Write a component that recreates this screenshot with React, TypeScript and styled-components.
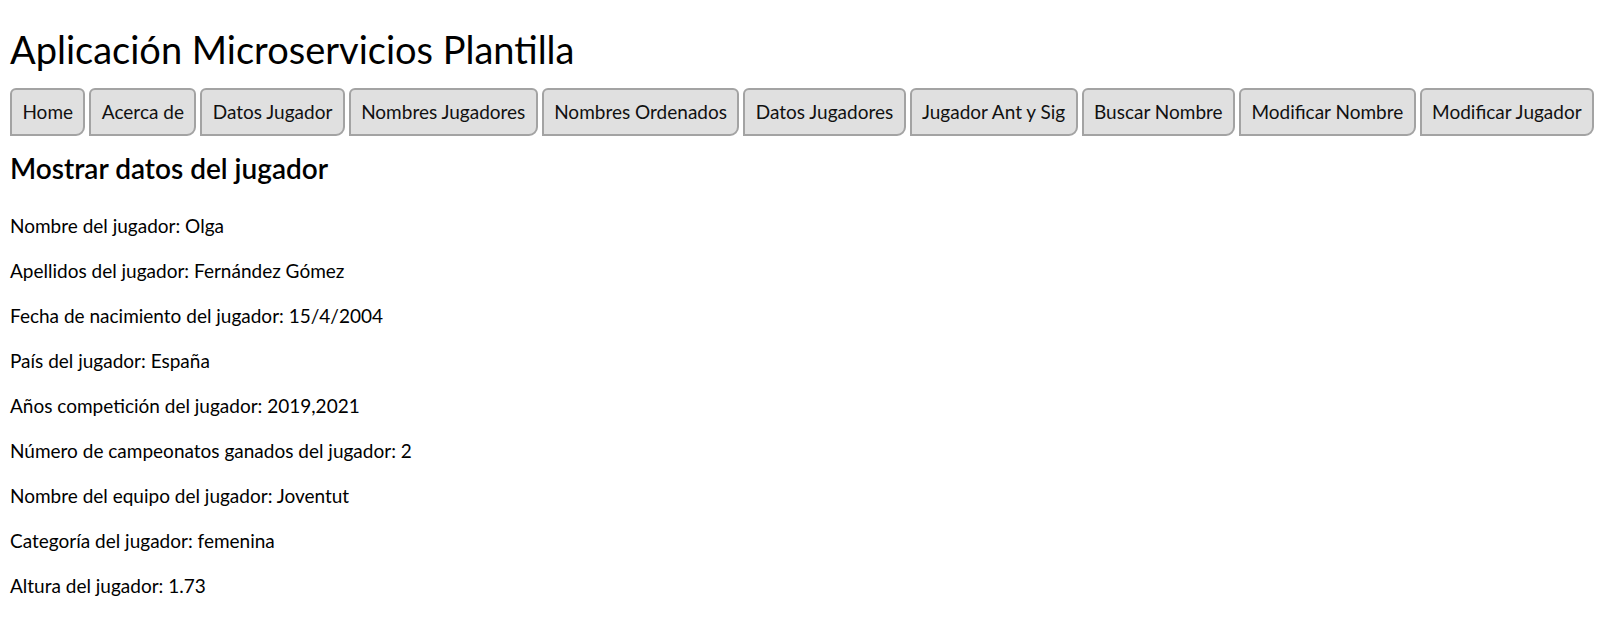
import React from "react";
import styled, { createGlobalStyle } from "styled-components";

const GlobalStyle = createGlobalStyle`
  html, body {
    margin: 0;
    padding: 0;
    background: #ffffff;
  }
  body {
    font-family: Lato, "Noto Sans", "Liberation Sans", sans-serif;
    color: #000000;
  }
`;

const Page = styled.div`
  padding: 8px 10px;
  display: flex;
  flex-direction: column;
  align-items: flex-start;
`;

const Title = styled.h1`
  margin: 17px 0 15px;
  font-size: 38px;
  line-height: 48px;
  font-weight: 400;
  color: #000;
`;

const Nav = styled.nav`
  display: flex;
  flex-wrap: wrap;
  gap: 4px;
`;

const NavButton = styled.button`
  font-family: inherit;
  font-size: 19px;
  line-height: 25px;
  padding: 9px 10.4px 10px;
  background: #e0e0e0;
  color: #111;
  border: 2px solid #a3a3a3;
  border-radius: 6px 6px 9px 0;
  cursor: pointer;
`;

const SectionTitle = styled.h2`
  margin: 15px 0 28px;
  font-size: 28px;
  line-height: 34px;
  font-weight: 600;
  color: #000;
`;

const Details = styled.div`
  display: flex;
  flex-direction: column;
  gap: 20px;
`;

const Row = styled.p`
  margin: 0;
  font-size: 19px;
  line-height: 25px;
`;

const buttons = [
  "Home",
  "Acerca de",
  "Datos Jugador",
  "Nombres Jugadores",
  "Nombres Ordenados",
  "Datos Jugadores",
  "Jugador Ant y Sig",
  "Buscar Nombre",
  "Modificar Nombre",
  "Modificar Jugador",
];

const rows = [
  "Nombre del jugador: Olga",
  "Apellidos del jugador: Fernández Gómez",
  "Fecha de nacimiento del jugador: 15/4/2004",
  "País del jugador: España",
  "Años competición del jugador: 2019,2021",
  "Número de campeonatos ganados del jugador: 2",
  "Nombre del equipo del jugador: Joventut",
  "Categoría del jugador: femenina",
  "Altura del jugador: 1.73",
];

export default function App() {
  return (
    <>
      <GlobalStyle />
      <Page>
        <Title>Aplicación Microservicios Plantilla</Title>
        <Nav>
          {buttons.map((b) => (
            <NavButton key={b}>{b}</NavButton>
          ))}
        </Nav>
        <SectionTitle>Mostrar datos del jugador</SectionTitle>
        <Details>
          {rows.map((r) => (
            <Row key={r}>{r}</Row>
          ))}
        </Details>
      </Page>
    </>
  );
}
